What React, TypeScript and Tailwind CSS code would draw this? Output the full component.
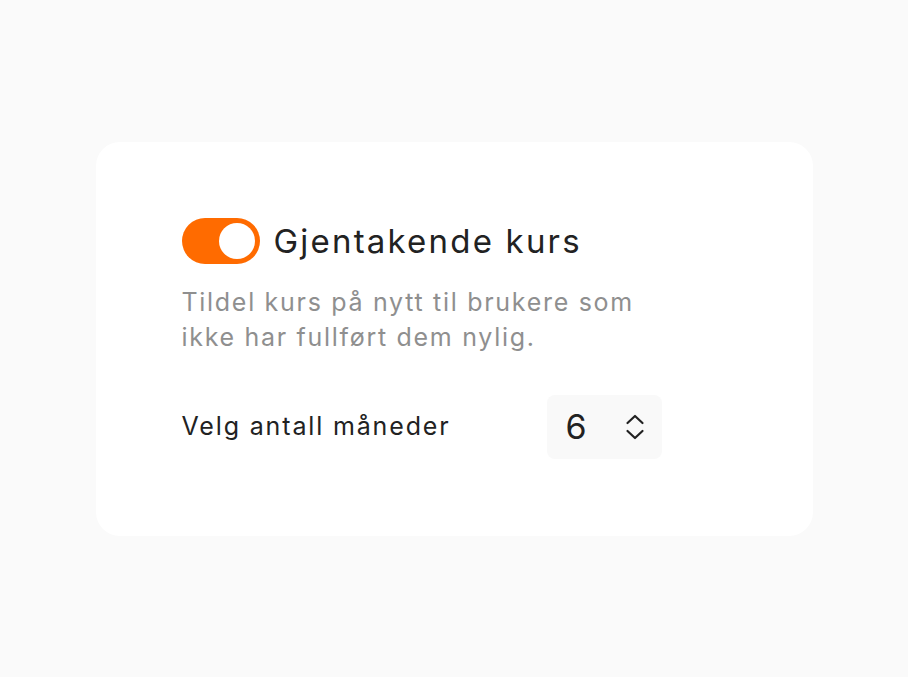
import { useState } from 'react';

function Toggle({ on, onChange }: { on: boolean; onChange: (v: boolean) => void }) {
  return (
    <button
      type="button"
      onClick={() => onChange(!on)}
      className={`flex h-[46px] w-[78px] shrink-0 items-center rounded-full p-[5px] ${
        on ? 'justify-end bg-[#ff6b00]' : 'justify-start bg-[#d4d4d4]'
      }`}
    >
      <span className="block h-[36px] w-[36px] rounded-full bg-white" />
    </button>
  );
}

export default function App() {
  const [enabled, setEnabled] = useState(true);

  return (
    <div
      className="flex min-h-screen items-center justify-center bg-[#fafafa]"
      style={{ fontFamily: 'Inter, "Noto Sans", sans-serif' }}
    >
      <div className="h-[394px] w-[717px] rounded-[24px] bg-white px-[86px] pt-[76px]">
        <div className="flex items-center gap-[14px]">
          <Toggle on={enabled} onChange={setEnabled} />
          <h2 className="text-[33px] leading-[40px] font-normal tracking-[2.2px] text-[#222222]">Gjentakende kurs</h2>
        </div>

        <p className="mt-[21px] w-[470px] text-[25px] leading-[35px] tracking-[1.7px] text-[#8f8f8f]">
          Tildel kurs på nytt til brukere som ikke har fullført dem nylig.
        </p>

        <div className="mt-[40px] flex w-[480px] items-center justify-between">
          <span className="text-[25px] leading-[35px] tracking-[1.85px] text-[#222222]">Velg antall måneder</span>
          <div className="flex h-[64px] w-[115px] items-center justify-between rounded-[8px] bg-[#f9f9f9] pl-[19px] pr-[17px]">
            <span className="text-[34px] leading-none text-[#222222]">6</span>
            <svg width="20" height="26" viewBox="0 0 20 26" fill="none" stroke="#222222" strokeWidth="2.2" strokeLinecap="round" strokeLinejoin="round">
              <path d="M2.5 9 L10 2 L17.5 9" />
              <path d="M2.5 17 L10 24 L17.5 17" />
            </svg>
          </div>
        </div>
      </div>
    </div>
  );
}
